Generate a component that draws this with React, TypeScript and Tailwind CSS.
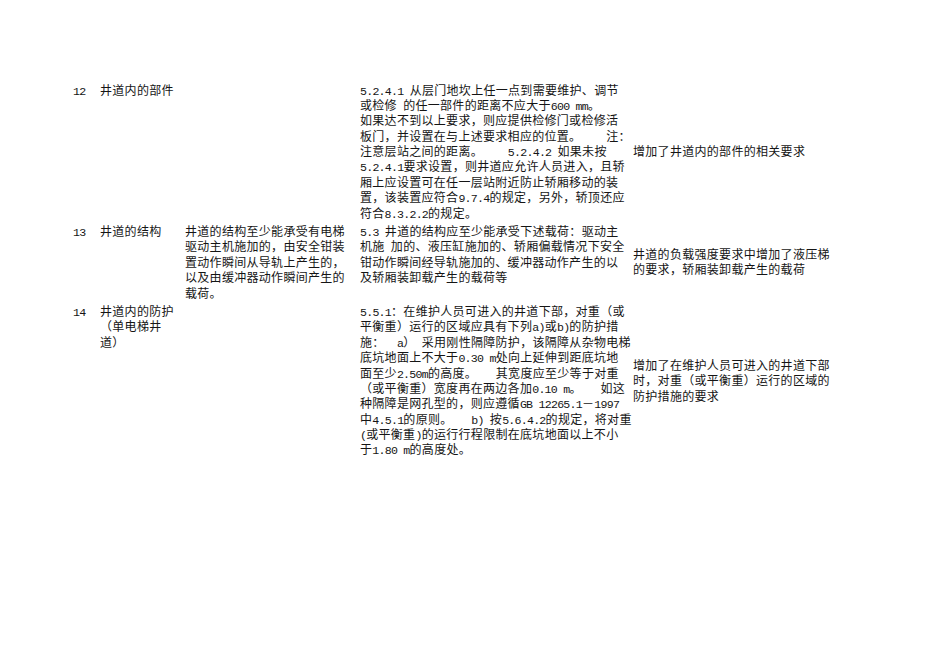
import React from "react";

const Txt = ({ s }: { s: string }) => {
  const parts = s.split(/([\x20-\x7e]+)/).filter((p) => p.length > 0);
  return (
    <>
      {parts.map((p, i) =>
        /^[\x20-\x7e]+$/.test(p) ? (
          <span
            key={i}
            className="text-[11.6px] tracking-[-0.75px]"
            style={{ fontFamily: '"Liberation Mono", monospace' }}
          >
            {p}
          </span>
        ) : (
          <span key={i}>{p}</span>
        )
      )}
    </>
  );
};

const Lines = ({ lines }: { lines: string[] }) => (
  <div>
    {lines.map((l, i) => (
      <div key={i} className="whitespace-pre h-[15.4px]">
        <Txt s={l} />
      </div>
    ))}
  </div>
);

type Row = {
  no: string;
  name: string[];
  old: string[];
  now: string[];
  note: string[];
};

const rows: Row[] = [
  {
    no: "12",
    name: ["井道内的部件"],
    old: [],
    now: [
      "5.2.4.1 从层门地坎上任一点到需要维护、调节",
      "或检修 的任一部件的距离不应大于600 mm。",
      "如果达不到以上要求，则应提供检修门或检修活",
      "板门，并设置在与上述要求相应的位置。    注：",
      "注意层站之间的距离。    5.2.4.2 如果未按",
      "5.2.4.1要求设置，则井道应允许人员进入，且轿",
      "厢上应设置可在任一层站附近防止轿厢移动的装",
      "置，该装置应符合9.7.4的规定，另外，轿顶还应",
      "符合8.3.2.2的规定。",
    ],
    note: ["增加了井道内的部件的相关要求"],
  },
  {
    no: "13",
    name: ["井道的结构"],
    old: [
      "井道的结构至少能承受有电梯",
      "驱动主机施加的，由安全钳装",
      "置动作瞬间从导轨上产生的，",
      "以及由缓冲器动作瞬间产生的",
      "载荷。",
    ],
    now: [
      "5.3 井道的结构应至少能承受下述载荷：驱动主",
      "机施 加的、液压缸施加的、轿厢偏载情况下安全",
      "钳动作瞬间经导轨施加的、缓冲器动作产生的以",
      "及轿厢装卸载产生的载荷等",
    ],
    note: ["井道的负载强度要求中增加了液压梯", "的要求，轿厢装卸载产生的载荷"],
  },
  {
    no: "14",
    name: ["井道内的防护", "（单电梯井", "道）"],
    old: [],
    now: [
      "5.5.1：在维护人员可进入的井道下部，对重（或",
      "平衡重）运行的区域应具有下列a)或b)的防护措",
      "施：  a） 采用刚性隔障防护，该隔障从杂物电梯",
      "底坑地面上不大于0.30 m处向上延伸到距底坑地",
      "面至少2.50m的高度。   其宽度应至少等于对重",
      "（或平衡重）宽度再在两边各加0.10 m。   如这",
      "种隔障是网孔型的，则应遵循GB 12265.1－1997",
      "中4.5.1的原则。   b) 按5.6.4.2的规定，将对重",
      "(或平衡重)的运行行程限制在底坑地面以上不小",
      "于1.80 m的高度处。",
    ],
    note: ["增加了在维护人员可进入的井道下部", "时，对重（或平衡重）运行的区域的", "防护措施的要求"],
  },
];

export default function App() {
  return (
    <div
      className="w-[950px] h-[672px] bg-white text-[#151515] text-[12px] leading-[15.4px] tracking-[0.3px] overflow-hidden"
      style={{ fontFamily: '"Noto Sans CJK SC", sans-serif' }}
    >
      <div className="pt-[80px] pl-[73px]">
        {rows.map((r) => (
          <div
            key={r.no}
            className="grid grid-cols-[27px_85px_175px_273px_220px] py-[1.5px]"
          >
            <div>
              <Txt s={r.no} />
            </div>
            <Lines lines={r.name} />
            <Lines lines={r.old} />
            <Lines lines={r.now} />
            <div className="self-center">
              <Lines lines={r.note} />
            </div>
          </div>
        ))}
      </div>
    </div>
  );
}
